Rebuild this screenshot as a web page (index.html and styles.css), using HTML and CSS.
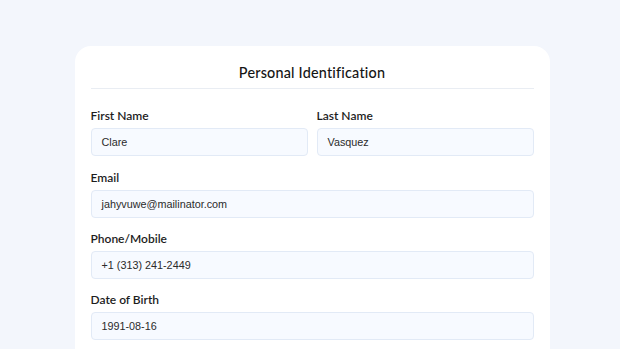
FILE: index.html
```html
<!DOCTYPE html>
<html lang="en">
<head>
    <meta charset="UTF-8">
    <meta name="viewport" content="width=device-width, initial-scale=1.0">
    <title>Personal Identification</title>
    <link rel="stylesheet" href="styles.css">
</head>
<body>
    <div class="page">
        <div class="card">
            <div class="card_title">Personal Identification</div>
            <div class="fields">
                <div class="row">
                    <div class="field">
                        <label>First Name</label>
                        <div class="input">Clare</div>
                    </div>
                    <div class="field">
                        <label>Last Name</label>
                        <div class="input">Vasquez</div>
                    </div>
                </div>
                <div class="field">
                    <label>Email</label>
                    <div class="input">jahyvuwe@mailinator.com</div>
                </div>
                <div class="field">
                    <label>Phone/Mobile</label>
                    <div class="input">+1 (313) 241-2449</div>
                </div>
                <div class="field">
                    <label>Date of Birth</label>
                    <div class="input">1991-08-16</div>
                </div>
            </div>
        </div>
    </div>
</body>
</html>
```

FILE: styles.css
```css
*{
    padding: 0;
    margin: 0;
    box-sizing: border-box;
}

html, body{
    height: 100%;
    overflow: hidden;
}

body{
    background-color: #f3f6fc;
    font-family: "Lato", "Noto Sans", sans-serif;
    color: #1c1c1c;
}

.page{
    padding-top: 46px;
    display: flex;
    justify-content: center;
}

.card{
    width: 475px;
    height: 400px;
    margin-left: 4px;
    background-color: #fff;
    border-radius: 16px;
    padding: 17px 16px 0 16px;
}

.card_title{
    height: 26px;
    line-height: 20px;
    text-align: center;
    font-size: 14.4px;
    font-weight: 500;
    letter-spacing: 0.2px;
    color: #151515;
    border-bottom: 1px solid #e9edf3;
}

.fields{
    display: flex;
    flex-direction: column;
    gap: 13px;
    padding-top: 19px;
}

.row{
    display: flex;
    gap: 9px;
    margin-bottom: 1px;
}

.row .field{
    flex: 1;
}

.field label{
    display: block;
    height: 16px;
    line-height: 16px;
    font-size: 12px;
    font-weight: 600;
    color: #1d1d1d;
    margin-bottom: 4px;
}

.input{
    height: 28px;
    line-height: 26px;
    padding: 0 10px;
    border: 1px solid #e2eaf6;
    border-radius: 4px;
    background-color: #f7faff;
    font-family: "Liberation Sans", Arial, sans-serif;
    font-size: 10.8px;
    color: #2b2b2b;
}
```
